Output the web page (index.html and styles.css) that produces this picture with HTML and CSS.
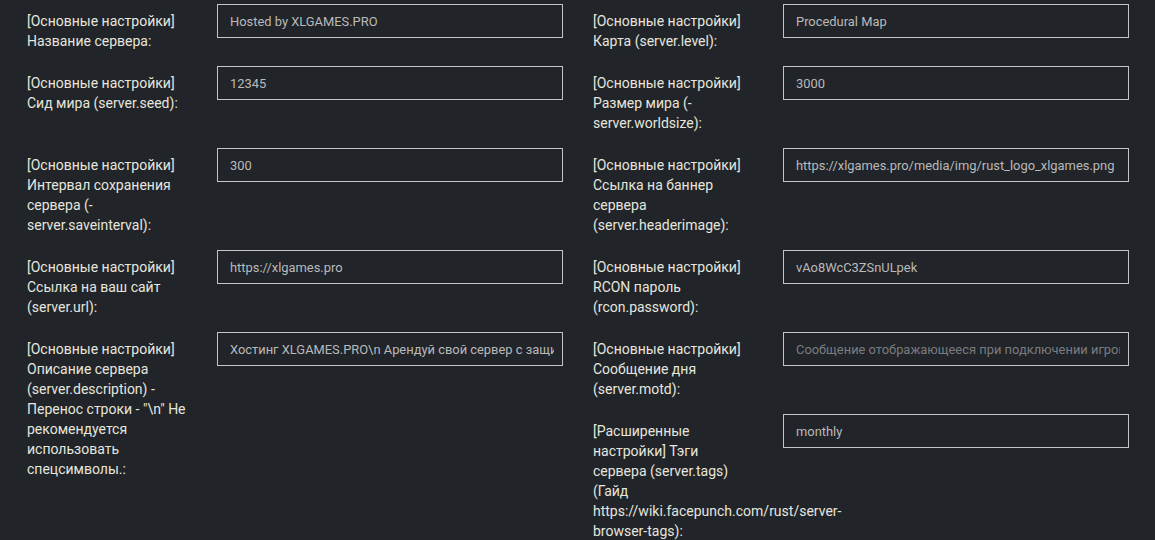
FILE: index.html
```html
<!DOCTYPE html>
<html lang="ru">
<head>
<meta charset="utf-8">
<title>Настройки сервера</title>
<link rel="stylesheet" href="styles.css">
</head>
<body>
<div class="settings">
  <div class="field">
    <label class="field-label">[Основные настройки] Название сервера:</label>
    <input class="field-input" type="text" value="Hosted by XLGAMES.PRO">
  </div>
  <div class="field">
    <label class="field-label">[Основные настройки] Карта (server.level):</label>
    <input class="field-input" type="text" value="Procedural Map">
  </div>

  <div class="field">
    <label class="field-label">[Основные настройки] Сид мира (server.seed):</label>
    <input class="field-input" type="text" value="12345">
  </div>
  <div class="field">
    <label class="field-label">[Основные настройки] Размер мира (-server.worldsize):</label>
    <input class="field-input" type="text" value="3000">
  </div>

  <div class="field">
    <label class="field-label">[Основные настройки] Интервал сохранения сервера (-server.saveinterval):</label>
    <input class="field-input" type="text" value="300">
  </div>
  <div class="field">
    <label class="field-label">[Основные настройки] Ссылка на баннер сервера (server.headerimage):</label>
    <input class="field-input" type="text" value="https://xlgames.pro/media/img/rust_logo_xlgames.png">
  </div>

  <div class="field">
    <label class="field-label">[Основные настройки] Ссылка на ваш сайт (server.url):</label>
    <input class="field-input" type="text" value="https://xlgames.pro">
  </div>
  <div class="field">
    <label class="field-label">[Основные настройки] RCON пароль (rcon.password):</label>
    <input class="field-input" type="text" value="vAo8WcC3ZSnULpek">
  </div>

  <div class="field">
    <label class="field-label">[Основные настройки] Описание сервера (server.description) - Перенос строки - "\n" Не рекомендуется использовать спецсимволы.:</label>
    <input class="field-input" type="text" value="Хостинг XLGAMES.PRO\n Арендуй свой сервер с защитой от DDoS">
  </div>
  <div class="stack">
    <div class="field">
      <label class="field-label">[Основные настройки] Сообщение дня (server.motd):</label>
      <input class="field-input" type="text" placeholder="Сообщение отображающееся при подключении игрока к серверу">
    </div>
    <div class="field">
      <label class="field-label">[Расширенные настройки] Тэги сервера (server.tags) (Гайд https://wiki.facepunch.com/rust/server-browser-tags):</label>
      <input class="field-input" type="text" value="monthly">
    </div>
  </div>
</div>
</body>
</html>
```

FILE: styles.css
```css
html, body {
  margin: 0;
  padding: 0;
  background: #212429;
}

body {
  font-family: Roboto, "Liberation Sans", Arial, sans-serif;
  font-size: 14px;
  line-height: 20px;
  color: #e6e6de;
}

.settings {
  display: grid;
  grid-template-columns: 536px 536px;
  column-gap: 30px;
  align-items: start;
  padding: 4px 0 0 27px;
}

.stack {
  display: flex;
  flex-direction: column;
}

.field {
  display: flex;
  align-items: flex-start;
  margin-bottom: 15px;
}

.field-label {
  flex: 0 0 190px;
  min-width: 0;
  box-sizing: border-box;
  padding: 7px 28px 0 0;
}

.field-input {
  flex: 0 0 346px;
  width: 346px;
  height: 34px;
  box-sizing: border-box;
  margin: 0;
  padding: 0 8px 0 12px;
  background: #212429;
  border: 1px solid #c4c5c7;
  border-radius: 0;
  color: #bababa;
  font-family: Roboto, "Liberation Sans", Arial, sans-serif;
  font-size: 12.9px;
  outline: none;
}

.field-input::placeholder {
  color: #7b7c7f;
  opacity: 1;
}
```
